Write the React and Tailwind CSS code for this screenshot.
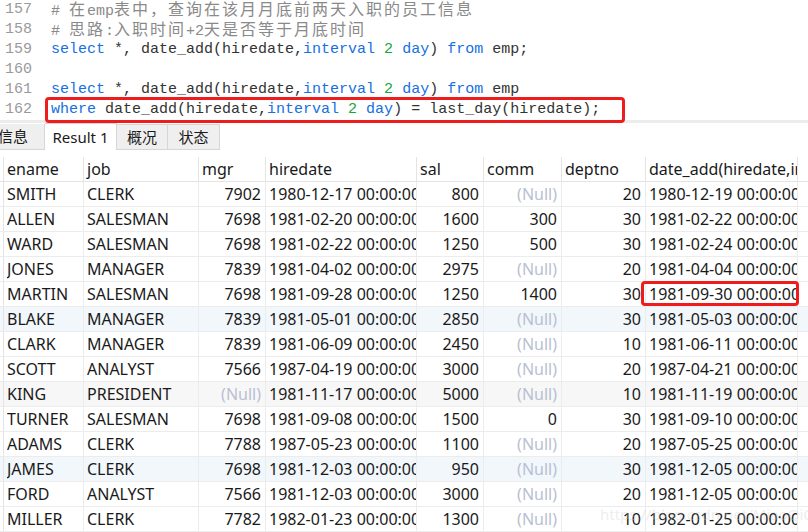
import React from "react";

const mono = { fontFamily: '"Liberation Mono", "DejaVu Sans Mono", monospace' };

const K = ({ children }) => <span className="text-[#1570e0]">{children}</span>;
const N = ({ children }) => <span className="text-[#13a83a]">{children}</span>;
const C = ({ children }) => (
  <span className="text-[16px] tracking-[2px]" style={{ fontFamily: '"Noto Sans CJK SC", sans-serif' }}>
    {children}
  </span>
);

const rows = [
  ["SMITH", "CLERK", "7902", "1980-12-17 00:00:00", "800", null, "20", "1980-12-19 00:00:00"],
  ["ALLEN", "SALESMAN", "7698", "1981-02-20 00:00:00", "1600", "300", "30", "1981-02-22 00:00:00"],
  ["WARD", "SALESMAN", "7698", "1981-02-22 00:00:00", "1250", "500", "30", "1981-02-24 00:00:00"],
  ["JONES", "MANAGER", "7839", "1981-04-02 00:00:00", "2975", null, "20", "1981-04-04 00:00:00"],
  ["MARTIN", "SALESMAN", "7698", "1981-09-28 00:00:00", "1250", "1400", "30", "1981-09-30 00:00:00"],
  ["BLAKE", "MANAGER", "7839", "1981-05-01 00:00:00", "2850", null, "30", "1981-05-03 00:00:00"],
  ["CLARK", "MANAGER", "7839", "1981-06-09 00:00:00", "2450", null, "10", "1981-06-11 00:00:00"],
  ["SCOTT", "ANALYST", "7566", "1987-04-19 00:00:00", "3000", null, "20", "1987-04-21 00:00:00"],
  ["KING", "PRESIDENT", null, "1981-11-17 00:00:00", "5000", null, "10", "1981-11-19 00:00:00"],
  ["TURNER", "SALESMAN", "7698", "1981-09-08 00:00:00", "1500", "0", "30", "1981-09-10 00:00:00"],
  ["ADAMS", "CLERK", "7788", "1987-05-23 00:00:00", "1100", null, "20", "1987-05-25 00:00:00"],
  ["JAMES", "CLERK", "7698", "1981-12-03 00:00:00", "950", null, "30", "1981-12-05 00:00:00"],
  ["FORD", "ANALYST", "7566", "1981-12-03 00:00:00", "3000", null, "20", "1981-12-05 00:00:00"],
  ["MILLER", "CLERK", "7782", "1982-01-23 00:00:00", "1300", null, "10", "1982-01-25 00:00:00"],
];

const cols = [
  { name: "ename", w: "w-[80px]", right: false },
  { name: "job", w: "w-[115px]", right: false },
  { name: "mgr", w: "w-[67px]", right: true },
  { name: "hiredate", w: "w-[151px]", right: false },
  { name: "sal", w: "w-[67px]", right: true },
  { name: "comm", w: "w-[78px]", right: true },
  { name: "deptno", w: "w-[84px]", right: true },
  { name: "date_add(hiredate,interval 2 day)", w: "w-[152px]", right: false },
];

const rowBg = { 5: "bg-[#f2f7fc]", 8: "bg-[#f7f7f7]", 11: "bg-[#f2f7fc]" };

const App = () => {
  const lines = [
    [157, <span className="text-[#8a8a8a]"># <C>在</C>emp<C>表中，查询在该月月底前两天入职的员工信息</C></span>],
    [158, <span className="text-[#8a8a8a]"># <C>思路</C>:<C>入职时间</C>+2<C>天是否等于月底时间</C></span>],
    [159, <span><K>select</K> *, date_add(hiredate,<K>interval</K> <N>2</N> <K>day</K>) <K>from</K> emp;</span>],
    [160, <span></span>],
    [161, <span><K>select</K> *, date_add(hiredate,<K>interval</K> <N>2</N> <K>day</K>) <K>from</K> emp</span>],
    [162, <span><K>where</K> date_add(hiredate,<K>interval</K> <N>2</N> <K>day</K>) = last_day(hiredate);</span>],
  ];

  return (
    <div className="relative w-[808px] h-[532px] overflow-hidden bg-white text-[#1a1a1a]" style={{ fontFamily: '"Noto Sans", "Noto Sans CJK SC", sans-serif' }}>
      {/* editor */}
      <div className="relative h-[120px] text-[15px] text-[#333]" style={mono}>
        {lines.map(([n, code]) => (
          <div key={n} className="flex h-[20px] items-center whitespace-pre">
            <div className="w-[36px] pr-[4px] text-right text-[#9a9a9a]">{n}</div>
            <div className="pl-[15px]">{code}</div>
          </div>
        ))}
        <div className="absolute left-[45px] top-[97px] w-[580px] h-[26px] rounded-[4px] border-[3px] border-[#ee1c1c]" />
      </div>
      <div className="h-[3px] bg-[#ececec]" />

      {/* tabs */}
      <div className="flex h-[27px] items-end text-[15px] whitespace-nowrap">
        <div className="flex h-[26px] w-[45px] shrink-0 items-center justify-end overflow-hidden pr-[16px] bg-[#efefef] border-r border-b border-[#d6d6d6]">
          <span className="shrink-0">信息</span>
        </div>
        <div className="flex h-[27px] w-[72px] shrink-0 items-center justify-center bg-white border-t border-r border-[#d6d6d6]">Result 1</div>
        <div className="flex h-[26px] w-[51px] shrink-0 items-center justify-center bg-[#efefef] border-t border-r border-b border-[#d6d6d6]">概况</div>
        <div className="flex h-[26px] w-[52px] shrink-0 items-center justify-center bg-[#efefef] border-t border-r border-b border-[#d6d6d6]">状态</div>
      </div>
      <div className="h-[7px]" />

      {/* grid */}
      <div className="text-[16px]">
        <div className="flex h-[25px] border-b border-[#e4e4e4]">
          <div className="w-[4px] border-r border-[#e4e4e4]" />
          {cols.map((c) => (
            <div key={c.name} className={`${c.w} shrink-0 overflow-hidden whitespace-nowrap border-r border-[#e4e4e4] pl-[3px] leading-[24px]`}>
              {c.name}
            </div>
          ))}
        </div>
        {rows.map((r, i) => (
          <div key={r[0]} className={`flex h-[25px] border-b border-[#ececec] ${rowBg[i] || "bg-white"}`}>
            <div className="w-[4px] border-r border-[#e4e4e4]" />
            {cols.map((c, j) => (
              <div
                key={c.name}
                className={`relative ${c.w} shrink-0 whitespace-nowrap border-r border-[#ececec] leading-[24px] ${c.right ? "text-right pr-[4px]" : "pl-[3px]"}`}
              >
                <div className="overflow-hidden">
                  {r[j] === null ? <span className="text-[#b8c0d2]">(Null)</span> : r[j]}
                </div>
                {i === 4 && j === 7 && (
                  <div className="absolute left-[-5px] top-[-1px] w-[158px] h-[25px] rounded-[4px] border-[3px] border-[#ee1c1c]" />
                )}
              </div>
            ))}
          </div>
        ))}
      </div>

      <div className="pointer-events-none absolute left-[600px] top-[503px] text-[15px] text-[#c8c8c8] opacity-30 whitespace-nowrap">
        https://blog.csdn.net/MiaoQiQi
      </div>
    </div>
  );
};

export default App;
